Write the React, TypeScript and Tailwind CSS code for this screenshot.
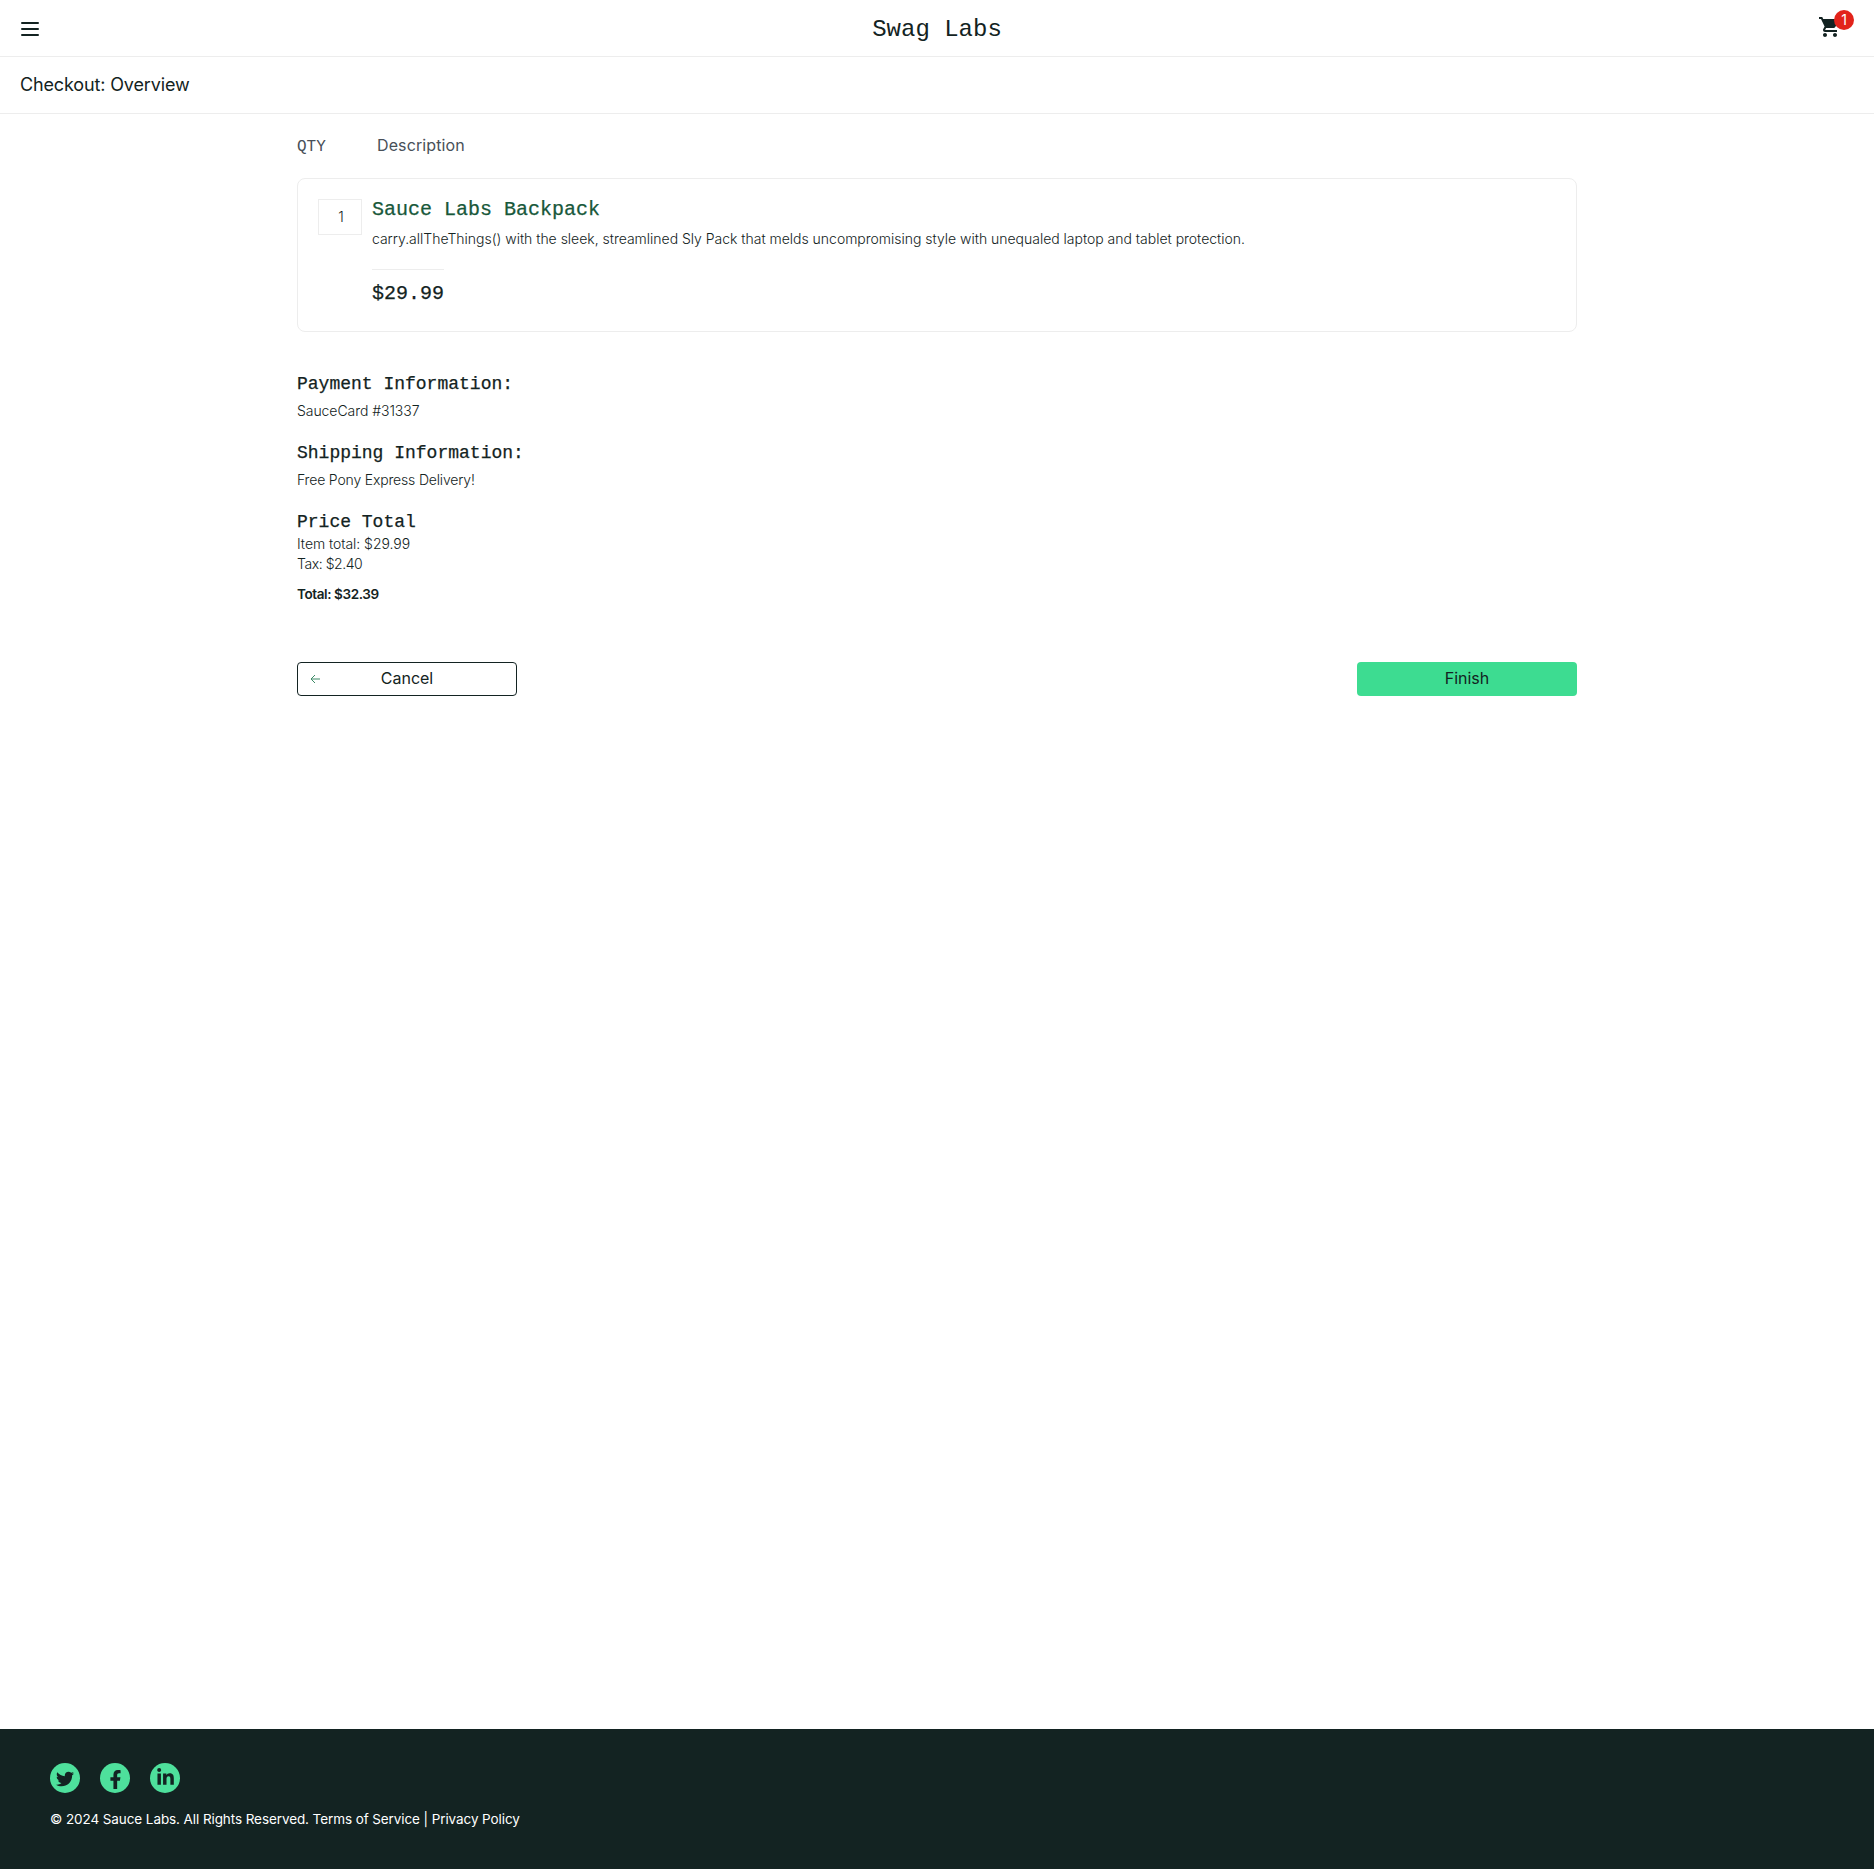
import React from 'react';
import { FaFacebookF, FaLinkedinIn, FaTwitter } from 'react-icons/fa';

const mono = "font-['Liberation_Mono',monospace]";

function Header() {
  return (
    <header>
      <div className="grid h-[57px] grid-cols-3 items-center border-b border-[#ededed] px-5">
        <button aria-label="Open menu" className="mt-0.5 flex w-5 flex-col gap-1 pl-px">
          <span className="h-0.5 w-[18px] rounded-sm bg-[#132322]" />
          <span className="h-0.5 w-[18px] rounded-sm bg-[#132322]" />
          <span className="h-0.5 w-[18px] rounded-sm bg-[#132322]" />
        </button>
        <div className={`pt-[3px] text-center text-2xl leading-[30px] text-[#132322] ${mono}`}>Swag Labs</div>
        <div className="relative mt-[-2px] mr-3 justify-self-end">
          <svg viewBox="0 0 24 24" className="h-6 w-6 fill-[#132322]">
            <path d="M7 18c-1.1 0-1.99.9-1.99 2S5.9 22 7 22s2-.9 2-2-.9-2-2-2zM1 2v2h2l3.6 7.59-1.35 2.45c-.16.28-.25.61-.25.96 0 1.1.9 2 2 2h12v-2H7.42c-.14 0-.25-.11-.25-.25l.03-.12.9-1.63h7.45c.75 0 1.41-.41 1.75-1.03l3.58-6.49A1 1 0 0 0 20 4H5.21l-.94-2H1zm16 16c-1.1 0-1.99.9-1.99 2s.89 2 1.99 2 2-.9 2-2-.9-2-2-2z" />
          </svg>
          <span className="absolute -top-[5px] -right-3 flex h-5 w-5 items-center justify-center rounded-full bg-[#e2231a] text-sm text-white">1</span>
        </div>
      </div>
      <div className="flex h-[57px] items-center border-b border-[#ededed] px-5">
        <h1 className="text-lg tracking-[-0.14px] text-[#132322]">Checkout: Overview</h1>
      </div>
    </header>
  );
}

function CartItem() {
  return (
    <section className="flex h-[154px] gap-2.5 rounded-lg border border-[#ededed] px-5 pt-5">
      <div className="flex h-9 w-11 shrink-0 items-center justify-center border border-[#ededed] pl-0.5 text-sm leading-5 font-light text-[#132322]">1</div>
      <div>
        <h2 className={`mt-[-1px] text-xl leading-6 text-[#18583a] [-webkit-text-stroke:0.25px] ${mono}`}>Sauce Labs Backpack</h2>
        <p className="mt-[7px] text-sm leading-5 font-light tracking-[-0.015px] whitespace-nowrap text-[#132322]">carry.allTheThings() with the sleek, streamlined Sly Pack that melds uncompromising style with unequaled laptop and tablet protection.</p>
        <div className={`mt-5 w-fit border-t border-[#ededed] pt-3 text-xl leading-6 text-[#132322] [-webkit-text-stroke:0.25px] ${mono}`}>$29.99</div>
      </div>
    </section>
  );
}

function Summary() {
  const heading = `text-lg leading-6 tracking-normal text-[#132322] [-webkit-text-stroke:0.25px] ${mono}`;
  return (
    <section className="mt-10 text-sm leading-5 font-light text-[#132322]">
      <h3 className={heading}>Payment Information:</h3>
      <p className="mt-[5px] tracking-[-0.06px]">SauceCard #31337</p>
      <h3 className={`mt-5 ${heading}`}>Shipping Information:</h3>
      <p className="mt-[5px] tracking-[-0.17px]">Free Pony Express Delivery!</p>
      <h3 className={`mt-5 ${heading}`}>Price Total</h3>
      <p className="tracking-[-0.05px]">Item total: $29.99</p>
      <p className="tracking-[-0.45px]">Tax: $2.40</p>
      <p className="mt-2.5 text-[13.5px] font-semibold tracking-[-0.4px]">Total: $32.39</p>
    </section>
  );
}

export default function App() {
  return (
    <div className="flex h-[1869px] flex-col bg-white font-['Inter',sans-serif]">
      <Header />
      <main className="mx-auto w-[1280px] flex-1">
        <div className="flex h-16 items-center pb-0.5 text-base text-[#485058]">
          <span className={`w-20 pt-[3px] ${mono}`}>QTY</span>
          <span className="tracking-[0.12px]">Description</span>
        </div>
        <CartItem />
        <Summary />
        <div className="mt-[58px] flex justify-between">
          <button className="relative h-[34px] w-[220px] rounded border border-[#132322] pb-0.5 text-base text-[#132322]">
            <svg viewBox="0 0 10 10" className="absolute top-[11px] left-3 h-2.5 w-2.5 fill-none stroke-[#3d8a66]">
              <path d="M10 5H1M5 1 1 5l4 4" />
            </svg>
            Cancel
          </button>
          <button className="h-[34px] w-[220px] rounded bg-[#3ddc91] pb-0.5 text-base text-[#132322]">Finish</button>
        </div>
      </main>
      <footer className="h-[140px] bg-[#132322] px-[50px] pt-[34px]">
        <div className="flex gap-5 text-[#132322]">
          <a className="flex h-[30px] w-[30px] items-center justify-center rounded-full bg-[#4ee09c] pt-0.5"><FaTwitter size={18} /></a>
          <a className="flex h-[30px] w-[30px] items-center justify-center rounded-full bg-[#4ee09c] pt-0.5"><FaFacebookF size={19} /></a>
          <a className="flex h-[30px] w-[30px] items-center justify-center rounded-full bg-[#4ee09c] pl-px"><FaLinkedinIn size={19} className="mb-px" /></a>
        </div>
        <p className="mt-4 text-[13.5px] leading-5 tracking-[-0.09px] text-white">© 2024 Sauce Labs. All Rights Reserved. Terms of Service | Privacy Policy</p>
      </footer>
    </div>
  );
}
